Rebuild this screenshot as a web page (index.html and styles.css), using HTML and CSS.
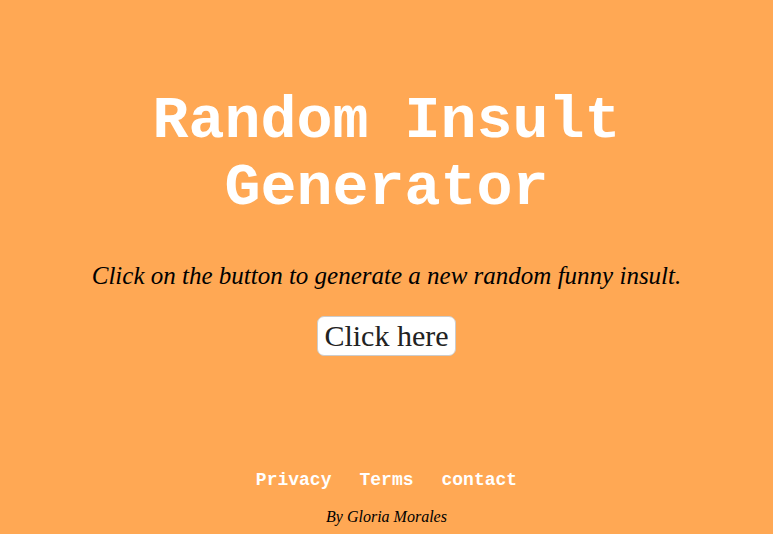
FILE: index.html
```html
<!DOCTYPE html>
<html>
<head>
<meta charset="utf-8">
<link rel="stylesheet" href="styles.css">
</head>
<body>
<main class="page">
  <h1 class="title">Random Insult Generator</h1>
  <p class="intro">Click on the button to generate a new random funny insult.</p>
  <button class="btn">Click here</button>
  <p class="insult"></p>
</main>
<footer class="footer">
  <nav class="links">
    <a href="#">Privacy</a>
    <a href="#">Terms</a>
    <a href="#">contact</a>
  </nav>
  <p class="author">By Gloria Morales</p>
</footer>
</body>
</html>
```

FILE: styles.css
```css
html, body {
  margin: 0;
  padding: 0;
  background: #ffa854;
  height: 100%;
}
body {
  display: flex;
  flex-direction: column;
  align-items: center;
  font-family: "Liberation Serif", "Times New Roman", serif;
}
.page {
  display: flex;
  flex-direction: column;
  align-items: center;
  padding-top: 88px;
  width: 100%;
}
.title {
  margin: 0;
  width: 560px;
  text-align: center;
  font-family: "Liberation Mono", "Courier New", monospace;
  font-weight: bold;
  font-size: 60px;
  line-height: 67px;
  color: #fff;
}
.intro {
  margin: 39px 0 0;
  font-style: italic;
  font-size: 25px;
  line-height: 29px;
  color: #000;
}
.btn {
  margin-top: 26px;
  font-family: "Liberation Serif", "Times New Roman", serif;
  font-size: 30px;
  color: #222;
  background: #fff;
  border: 1px solid #ccc;
  border-radius: 7px;
  padding: 3px 6px 4px;
  line-height: 31px;
}
.insult {
  margin: 0;
}
.footer {
  margin-top: auto;
  display: flex;
  flex-direction: column;
  align-items: center;
  padding-bottom: 8px;
}
.links {
  display: flex;
  gap: 28px;
}
.links a {
  font-family: "Liberation Mono", "Courier New", monospace;
  font-weight: bold;
  font-size: 18px;
  line-height: 20px;
  color: #fff;
  text-decoration: none;
}
.author {
  margin: 18px 0 0;
  font-style: italic;
  font-size: 16px;
  line-height: 18px;
  color: #000;
}
```
